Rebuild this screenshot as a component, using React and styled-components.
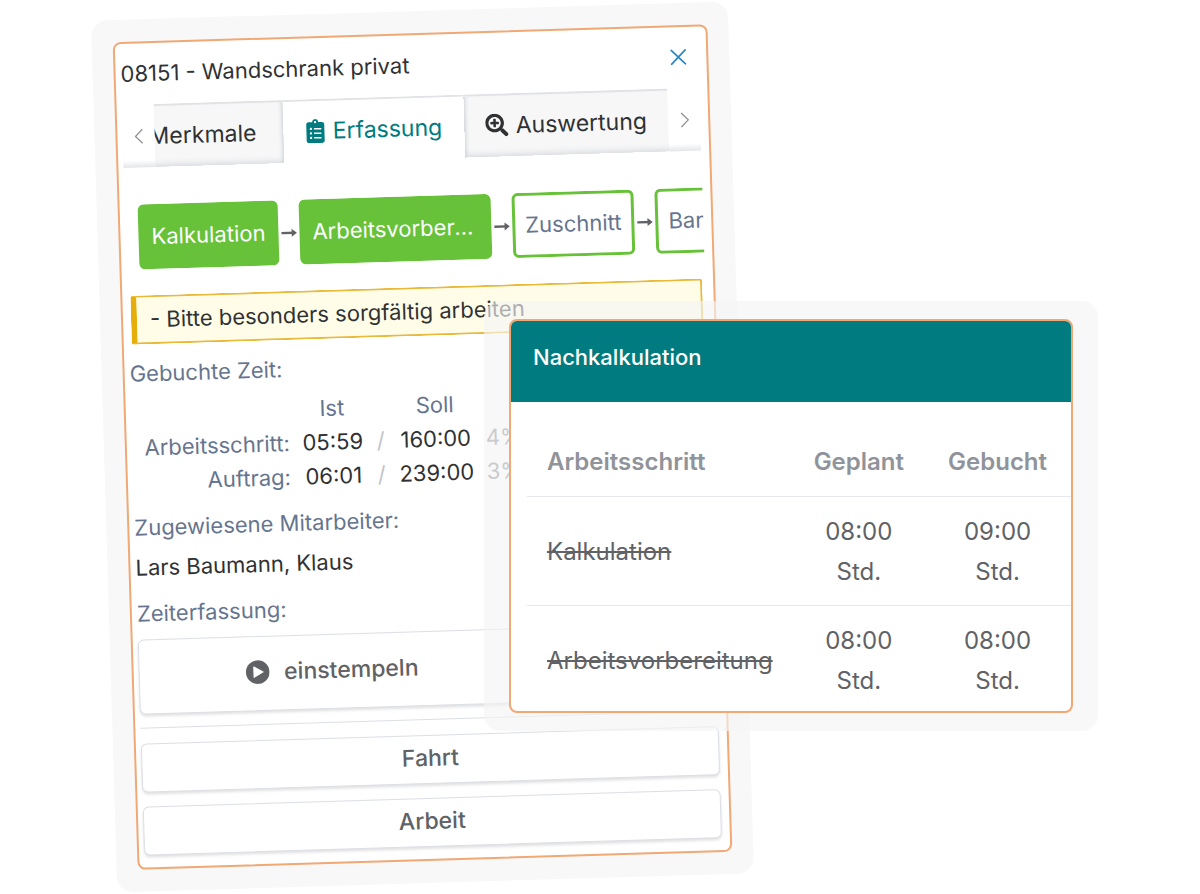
import React from "react";
import styled, { createGlobalStyle } from "styled-components";
import { FaClipboardList, FaSearchPlus } from "react-icons/fa";

const GlobalStyle = createGlobalStyle`
  * {
    box-sizing: border-box;
  }
  body {
    margin: 0;
    background-color: #ffffff;
    font-family: Inter, "Liberation Sans", sans-serif;
    font-size: 22px;
    color: #303133;
  }
  button {
    font-family: inherit;
    font-size: inherit;
    margin: 0;
    cursor: pointer;
  }
`;

const steps = [
  { name: "Kalkulation", done: true },
  { name: "Arbeitsvorbereitung", done: true },
  { name: "Zuschnitt", done: false },
  { name: "Bankraum", done: false }
];

const times = [
  { label: "Arbeitsschritt:", ist: "05:59", soll: "160:00", percent: "4%" },
  { label: "Auftrag:", ist: "06:01", soll: "239:00", percent: "3%" }
];

const costs = [
  { name: "Kalkulation", planned: "08:00", booked: "09:00" },
  { name: "Arbeitsvorbereitung", planned: "08:00", booked: "08:00" }
];

const Chevron = ({ right }) => (
  <svg width="9" height="16" viewBox="0 0 9 16" fill="none" stroke="#909399" strokeWidth="1.3">
    <path d={right ? "M1 1l7 7-7 7" : "M8 1L1 8l7 7"} />
  </svg>
);

const PlayIcon = () => (
  <svg width="24" height="24" viewBox="0 0 24 24">
    <circle cx="12" cy="12" r="11.8" fill="#606266" />
    <path d="M8.2 6.8v10.4L17.4 12z" fill="#ffffff" stroke="#ffffff" strokeLinejoin="round" />
  </svg>
);

const OrderCard = () => (
  <OrderFrame>
    <OrderPanel>
      <Header>
        <Title>08151 - Wandschrank privat</Title>
        <CloseButton aria-label="Schließen">
          <svg width="16" height="16" viewBox="0 0 16 16" stroke="#2e86c1" strokeWidth="1.7">
            <path d="M.5.5l15 15M15.5.5l-15 15" />
          </svg>
        </CloseButton>
      </Header>

      <TabBar>
        <TabArrow aria-label="Zurück">
          <Chevron />
        </TabArrow>
        <Tabs>
          <Tab $width="129px" $end>
            Merkmale
          </Tab>
          <Tab $width="181px" $active>
            <FaClipboardList size={24} />
            Erfassung
          </Tab>
          <Tab $width="206px">
            <FaSearchPlus size={23} />
            Auswertung
          </Tab>
        </Tabs>
        <TabArrow aria-label="Weiter">
          <Chevron right />
        </TabArrow>
      </TabBar>

      <Steps>
        {steps.map((step, i) => (
          <React.Fragment key={step.name}>
            {i > 0 && (
              <StepArrow width="21" height="10" viewBox="0 0 21 10">
                <path d="M3 5h13" stroke="#606266" strokeWidth="2.4" />
                <path d="M13.2 1L18.4 5l-5.2 4z" fill="#606266" />
              </StepArrow>
            )}
            <Step $done={step.done}>{step.name}</Step>
          </React.Fragment>
        ))}
      </Steps>

      <Notice>- Bitte besonders sorgfältig arbeiten</Notice>

      <Label>Gebuchte Zeit:</Label>
      <TimeTable>
        <colgroup>
          <col width="158" />
          <col width="86" />
          <col width="10" />
          <col width="100" />
          <col />
        </colgroup>
        <thead>
          <tr>
            <td />
            <TimeHead>Ist</TimeHead>
            <td />
            <TimeHead>Soll</TimeHead>
            <td />
          </tr>
        </thead>
        <tbody>
          {times.map(row => (
            <tr key={row.label}>
              <TimeLabel scope="row">{row.label}</TimeLabel>
              <TimeValue>{row.ist}</TimeValue>
              <Slash>/</Slash>
              <TimeValue>{row.soll}</TimeValue>
              <Percent>{row.percent}</Percent>
            </tr>
          ))}
        </tbody>
      </TimeTable>

      <Label>Zugewiesene Mitarbeiter:</Label>
      <Employees>Lars Baumann, Klaus</Employees>
      <Label>Zeiterfassung:</Label>

      <StampButton>
        <PlayIcon />
        einstempeln
      </StampButton>
      <Divider />
      <Actions>
        <ActionButton>Fahrt</ActionButton>
        <ActionButton>Arbeit</ActionButton>
      </Actions>
    </OrderPanel>
  </OrderFrame>
);

const CostCard = () => (
  <CostFrame>
    <CostPanel>
      <CostHeader>Nachkalkulation</CostHeader>
      <CostBody>
        <CostTable>
          <colgroup>
            <col width="49%" />
            <col width="24%" />
            <col width="27%" />
          </colgroup>
          <thead>
            <tr>
              <CostHead $left>Arbeitsschritt</CostHead>
              <CostHead>Geplant</CostHead>
              <CostHead>Gebucht</CostHead>
            </tr>
          </thead>
          <tbody>
            {costs.map(row => (
              <CostRow key={row.name}>
                <CostCell $left>
                  <s>{row.name}</s>
                </CostCell>
                <CostCell>
                  {row.planned}
                  <br />
                  Std.
                </CostCell>
                <CostCell>
                  {row.booked}
                  <br />
                  Std.
                </CostCell>
              </CostRow>
            ))}
          </tbody>
        </CostTable>
      </CostBody>
    </CostPanel>
  </CostFrame>
);

const App = () => (
  <>
    <GlobalStyle />
    <Scene>
      <OrderCard />
      <CostCard />
    </Scene>
  </>
);

// the two cards share one row and overlap in the third column
const Scene = styled.main`
  display: grid;
  grid-template-columns:
    minmax(0, 104fr) minmax(0, 380fr) minmax(0, 257fr) minmax(0, 357fr)
    minmax(0, 102fr);
  align-items: start;
  padding-top: 11px;
  overflow: hidden;
  min-height: 100vh;
`;

const OrderFrame = styled.section`
  grid-column: 2 / 4;
  grid-row: 1;
  padding: 22px 21px;
  border-radius: 16px;
  background-color: #f8f8f8;
  transform: rotate(-1.73deg);
`;
const OrderPanel = styled.div`
  border: 2px solid #f0a875;
  border-radius: 8px;
  padding: 0 8px 12px 5px;
  background-color: #ffffff;
  overflow: hidden;
`;

const Header = styled.header`
  display: flex;
  justify-content: space-between;
  align-items: center;
  height: 61px;
  padding: 0 12px 2px 0;
`;
const Title = styled.h1`
  margin: 0;
  font-size: 22px;
  font-weight: 400;
`;
const CloseButton = styled.button`
  display: flex;
  padding: 0;
  background: none;
  border: none;
`;

const TabBar = styled.nav`
  display: flex;
  height: 63px;
`;
const TabArrow = styled.button`
  flex: 0 0 32px;
  display: flex;
  justify-content: center;
  align-items: center;
  padding: 0;
  border: none;
  background: linear-gradient(to top, #e4e6e9, #ffffff 7px);
`;
const Tabs = styled.div`
  flex: 1;
  display: flex;
  overflow: hidden;
`;
const Tab = styled.button`
  flex: 0 0 ${props => props.$width};
  display: flex;
  justify-content: ${props => (props.$end ? "flex-end" : "center")};
  align-items: center;
  gap: ${props => (props.$active ? "5px" : "7px")};
  overflow: hidden;
  padding: ${props => (props.$end ? "0 27px 2px 0" : "0 2px 2px 0")};
  border: none;
  border-top: 2px solid #e0e2e6;
  font-size: 23px;
  color: ${props => (props.$active ? "#007c80" : "#303133")};
  background-color: ${props => (props.$active ? "#ffffff" : "#f7f7f8")};
  box-shadow: ${props =>
    props.$active
      ? "none"
      : `inset 0 -7px 6px -5px #d5d8dd, inset ${props.$end ? "-4px" : "4px"} 0 4px -3px #c8ccd2`};
`;

const Steps = styled.div`
  display: flex;
  align-items: center;
  margin-top: 37px;
  padding-left: 13px;
  overflow: hidden;
`;
const Step = styled.div`
  flex: none;
  max-width: 192px;
  height: 65px;
  padding: 0 10px;
  border: 3px solid #67c23a;
  border-radius: 6px;
  line-height: 58px;
  overflow: hidden;
  white-space: nowrap;
  text-overflow: ellipsis;
  color: ${props => (props.$done ? "#ffffff" : "#66748e")};
  background-color: ${props => (props.$done ? "#67c23a" : "#ffffff")};
`;
const StepArrow = styled.svg`
  flex: none;
`;

const Notice = styled.div`
  margin: 26px 3px 0;
  padding: 0 13px;
  border: 2px solid #e9b93a;
  border-left: 6px solid #e6ae0a;
  border-radius: 3px;
  line-height: 45px;
  background-color: #fffde8;
`;

const Label = styled.div`
  margin-top: 12px;
  line-height: 34px;
  color: #66748e;
`;
const Employees = styled.div`
  margin-top: 6px;
  line-height: 34px;
`;

const TimeTable = styled.table`
  width: 100%;
  margin-top: 6px;
  table-layout: fixed;
  border-collapse: collapse;
  line-height: 34px;
  td,
  th {
    padding: 0;
  }
`;
const TimeHead = styled.th`
  font-weight: 400;
  text-align: center;
  color: #66748e;
`;
const TimeLabel = styled.th`
  font-weight: 400;
  text-align: right;
  color: #66748e;
`;
const TimeValue = styled.td`
  text-align: center;
`;
const Slash = styled.td`
  text-align: center;
  color: #c0c4cc;
`;
const Percent = styled.td`
  color: #7d828a;
`;

const ActionButton = styled.button`
  width: 100%;
  height: 49px;
  padding: 0 0 3px;
  border: 1px solid #dcdfe6;
  border-radius: 6px;
  font-size: 23px;
  font-weight: 500;
  color: #606266;
  background-color: #ffffff;
  box-shadow: 0 2px 3px rgba(0, 0, 0, 0.12);
`;
const StampButton = styled(ActionButton)`
  display: flex;
  justify-content: center;
  align-items: center;
  gap: 14px;
  width: 67%;
  height: 75px;
  margin-top: 9px;
`;
const Divider = styled.hr`
  height: 1px;
  margin: 13px 0 15px;
  border: none;
  background-color: #dcdfe6;
`;
const Actions = styled.div`
  display: flex;
  flex-direction: column;
  gap: 14px;
`;

const CostFrame = styled.section`
  grid-column: 3 / 5;
  grid-row: 1;
  z-index: 1;
  margin-top: 290px;
  padding: 18px 25px;
  border-radius: 16px;
  background-color: rgba(244, 244, 244, 0.64);
`;
const CostPanel = styled.div`
  border: 2px solid #f0a875;
  border-radius: 8px;
  background-color: #ffffff;
  overflow: hidden;
`;
const CostHeader = styled.h2`
  height: 81px;
  margin: 0;
  padding: 0 22px;
  font-size: 22px;
  font-weight: 500;
  line-height: 72px;
  color: #ffffff;
  background-color: #007c80;
`;
const CostBody = styled.div`
  padding: 24px 0 0 16px;
`;
const CostTable = styled.table`
  width: 100%;
  table-layout: fixed;
  border-collapse: collapse;
  font-size: 24px;
  line-height: 40px;
`;
const CostHead = styled.th`
  padding: ${props => (props.$left ? "16px 0 14px 20px" : "16px 0 14px")};
  border-bottom: 1px solid #e6e8ee;
  font-weight: 600;
  text-align: ${props => (props.$left ? "left" : "center")};
  color: #909399;
`;
const CostCell = styled.td`
  padding: ${props => (props.$left ? "15px 0 13px 20px" : "15px 0 13px")};
  text-align: ${props => (props.$left ? "left" : "center")};
  color: #606266;
`;
const CostRow = styled.tr`
  border-bottom: 1px solid #e6e8ee;
  &:last-child {
    border-bottom: none;
  }
  &:last-child ${CostCell} {
    padding-bottom: 10px;
  }
`;

export default App;
